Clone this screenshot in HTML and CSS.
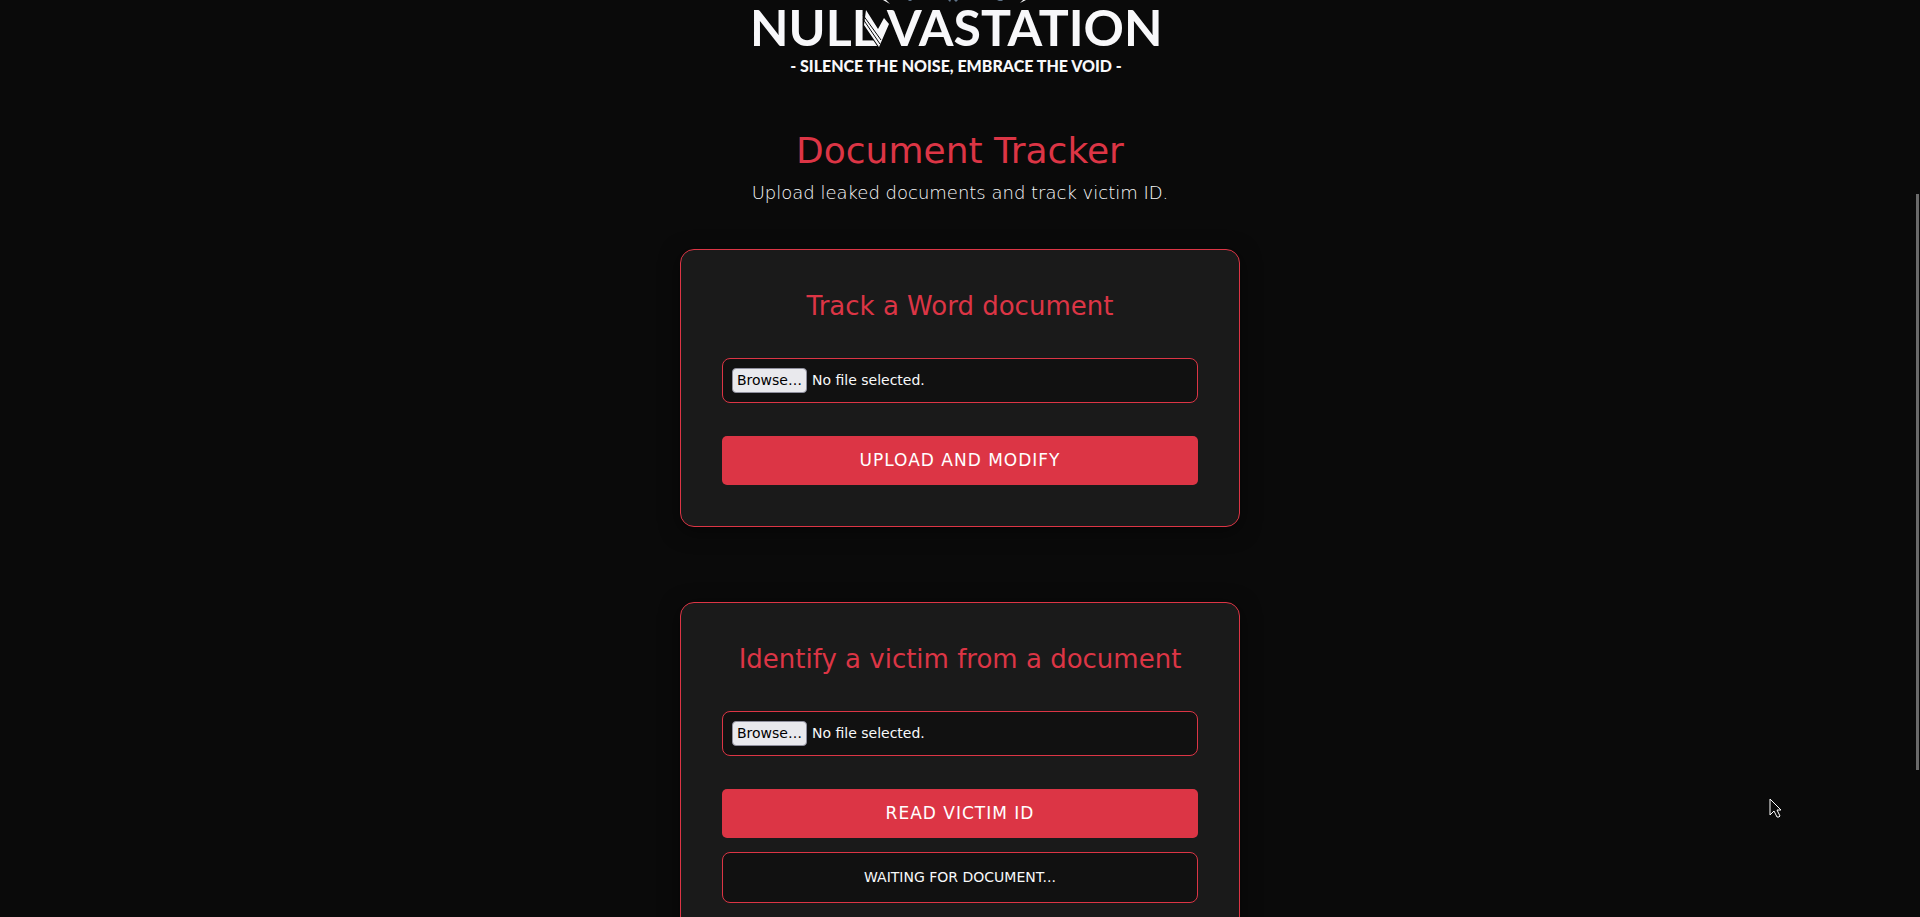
FILE: index.html
```html
<!DOCTYPE html>
<html lang="en">
<head>
<meta charset="utf-8">
<title>Document Tracker</title>
<link rel="stylesheet" href="styles.css">
</head>
<body>
<main class="page">
  <div class="logo">
    <svg class="logo-art" viewBox="0 0 420 85" role="img" aria-label="NullVastation">
      <g class="shards">
        <path d="M133 0h3l4 4z"/>
        <path d="M276 0h-3l-3 3z"/>
        <path class="steel" d="M158 0h4l-1 1h-2zM198 0h3l-1 2zM204 0h4l-2 2zM247 0h6l-1 1h-3z"/>
      </g>
      <text class="wordmark" x="0" y="46">NULL</text>
      <text class="wordmark" x="137" y="46">VASTATION</text>
      <path class="mark" d="M116 10l12 19 6-11 5 6-10 23-15-22z"/>
      <path class="mark-lines" d="M113 15l18 25M113 19l17 25"/>
      <text class="motto" x="206" y="72">- SILENCE THE NOISE, EMBRACE THE VOID -</text>
    </svg>
  </div>

  <header class="intro">
    <h1 class="title">Document Tracker</h1>
    <p class="lead">Upload leaked documents and track victim ID.</p>
  </header>

  <form class="card">
    <h2 class="card-title">Track a Word document</h2>
    <label class="file-field">
      <input class="file-input" type="file" aria-label="Word document">
      <span class="browse">Browse…</span>
      <span>No file selected.</span>
    </label>
    <button class="submit" type="button">Upload and modify</button>
  </form>

  <form class="card">
    <h2 class="card-title">Identify a victim from a document</h2>
    <label class="file-field">
      <input class="file-input" type="file" aria-label="Document to identify">
      <span class="browse">Browse…</span>
      <span>No file selected.</span>
    </label>
    <button class="submit" type="button">Read victim ID</button>
    <output class="status">Waiting for document...</output>
  </form>
</main>
<div class="scroll-thumb"></div>
<svg class="pointer" viewBox="0 0 13 21" aria-hidden="true">
  <path d="M1 1v16l4-4 3 6 2 0 1-1-3-6h4z"/>
</svg>
</body>
</html>
```
FILE: styles.css
```css
* {
  box-sizing: border-box;
}

body {
  margin: 0;
  height: 100vh;
  overflow: hidden;
  background: #0a0a0a;
  color: #f8f9fa;
  font-family: "DejaVu Sans", Verdana, sans-serif;
}

.page {
  display: flex;
  flex-direction: column;
  align-items: center;
}

.logo-art {
  display: block;
  width: 420px;
  height: 85px;
  fill: #f8f8fa;
}

.steel {
  fill: #5f7388;
}

.wordmark {
  font: 700 50px Lato, sans-serif;
}

.mark {
  stroke: #0a0a0a;
  stroke-width: 2px;
  paint-order: stroke;
}

.mark-lines {
  fill: none;
  stroke: #0a0a0a;
}

.motto {
  font: 900 16px Lato, sans-serif;
  text-anchor: middle;
}

.intro {
  margin: 45px 0 43px;
  text-align: center;
}

.title {
  margin: 0;
  color: #dc3545;
  font-size: 36px;
  font-weight: 400;
  line-height: 42px;
}

.lead {
  margin: 8px 0 0;
  color: #f8f9fa;
  font-size: 18px;
  font-weight: 300;
  line-height: 26px;
}

.card {
  display: flex;
  flex-direction: column;
  width: 100%;
  max-width: 560px;
  margin-bottom: 75px;
  padding: 41px;
  border: 1px solid #dc3545;
  border-radius: 14px;
  background: #1a1a1a;
  box-shadow: 0 4px 20px rgba(0, 0, 0, 0.5);
}

.card-title {
  margin: 0 0 37px;
  color: #dc3545;
  font-size: 26px;
  font-weight: 400;
  line-height: 30px;
  text-align: center;
}

.file-field {
  display: flex;
  align-items: center;
  gap: 5px;
  margin-bottom: 33px;
  padding: 9px;
  border: 1px solid #dc3545;
  border-radius: 8px;
  background: #111;
  font-size: 14px;
  line-height: 17px;
}

.file-input {
  position: absolute;
  width: 1px;
  height: 1px;
  opacity: 0;
}

.browse {
  padding: 3px 4px;
  border: 1px solid #8f8f9d;
  border-radius: 4px;
  background: #e9e9ed;
  color: #000;
}

.submit {
  padding: 12px;
  border: 0;
  border-radius: 5px;
  background: #dc3545;
  color: #fff;
  font: 400 17px/25px "DejaVu Sans", Verdana, sans-serif;
  letter-spacing: 1px;
  text-transform: uppercase;
}

.status {
  margin-top: 14px;
  padding: 15px;
  border: 1px solid #dc3545;
  border-radius: 8px;
  background: #111;
  font-size: 14px;
  line-height: 19px;
  text-align: center;
  text-transform: uppercase;
}

.scroll-thumb {
  position: fixed;
  top: 194px;
  right: 1px;
  width: 3px;
  height: 576px;
  background: #6a6a6a;
}

.pointer {
  position: fixed;
  top: 798px;
  right: 138px;
  width: 13px;
  height: 21px;
  fill: #0a0a0a;
  stroke: #fff;
}
```
